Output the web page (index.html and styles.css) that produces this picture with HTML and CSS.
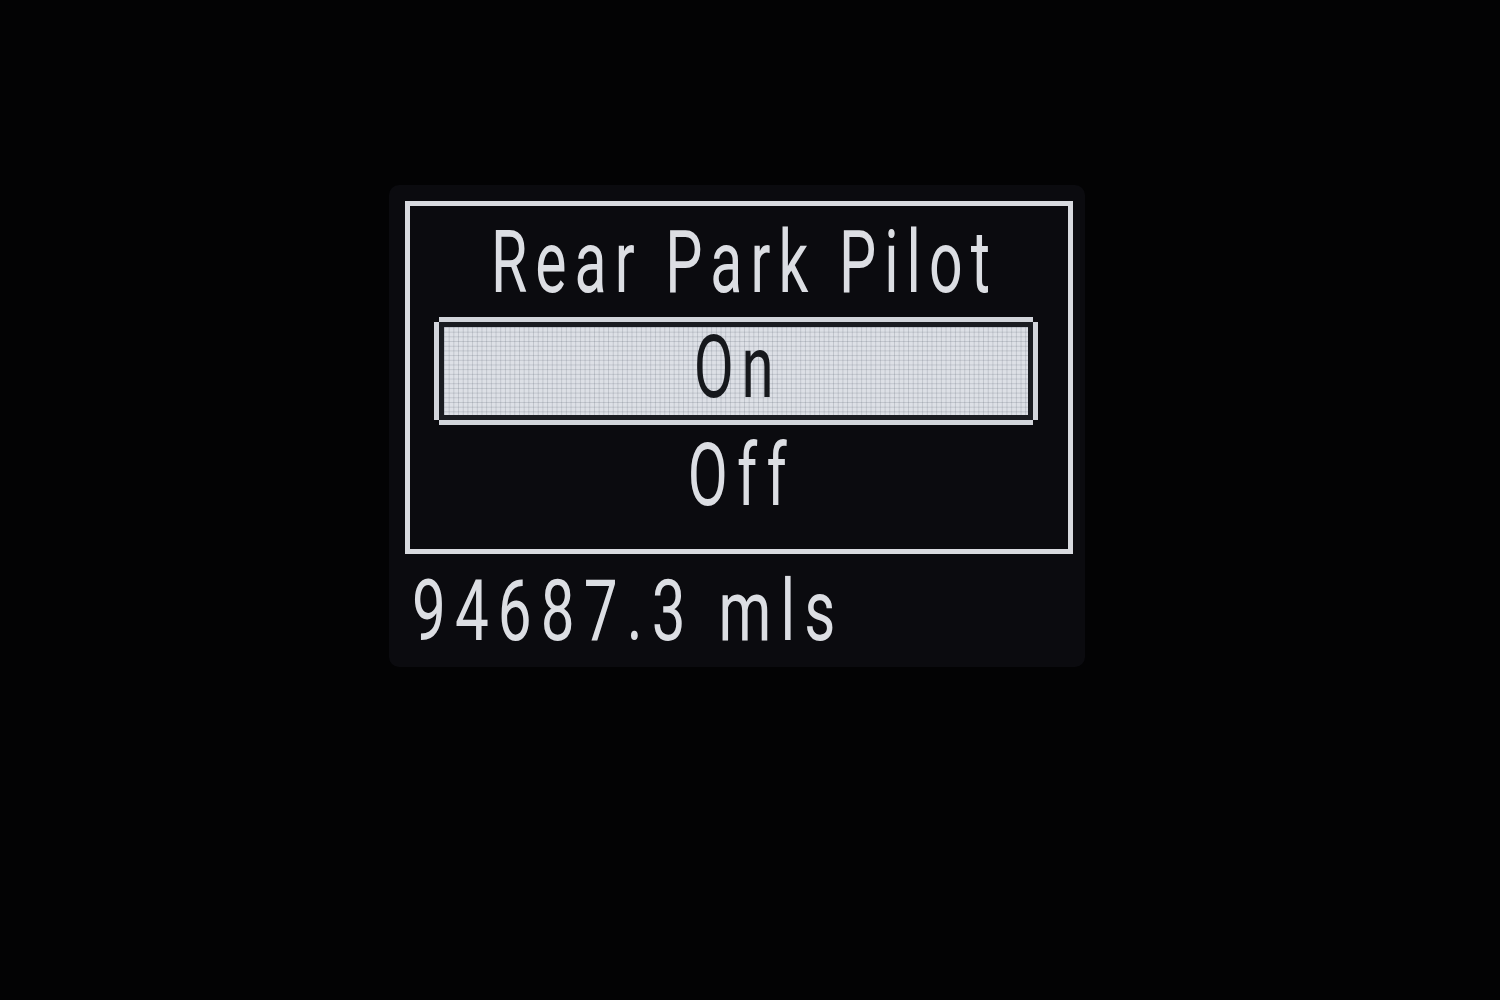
FILE: index.html
```html
<!DOCTYPE html>
<html lang="en">
<head>
<meta charset="utf-8">
<title>Rear Park Pilot</title>
<link rel="stylesheet" href="styles.css">
</head>
<body>
<div class="screen">
  <div class="frame">
    <div class="title-row"><span class="txt title">Rear Park Pilot</span></div>
    <div class="sel">
      <div class="sel-inner"><span class="txt on">On</span></div>
    </div>
    <div class="off-row"><span class="txt off">Off</span></div>
  </div>
  <div class="odo-row"><span class="txt odo">94687.3 mls</span></div>
</div>
</body>
</html>
```
FILE: styles.css
```css
html, body {
  margin: 0;
  padding: 0;
  background: #030304;
  width: 1500px;
  height: 1000px;
  overflow: hidden;
}

.screen {
  margin: 185px 0 0 389px;
  width: 696px;
  height: 482px;
  box-sizing: border-box;
  padding: 16px;
  border-radius: 10px;
  background: #0b0b0f;
  display: flex;
  flex-direction: column;
}

.frame {
  width: 668px;
  height: 356px;
  box-sizing: border-box;
  border: 5px solid #d8dadf;
  display: flex;
  flex-direction: column;
}

.txt {
  display: inline-block;
  font-family: Roboto, "Liberation Sans", sans-serif;
  font-weight: 400;
  font-size: 88px;
  line-height: 80px;
  white-space: nowrap;
}

.title-row,
.off-row {
  display: flex;
  justify-content: center;
  height: 80px;
}

.title-row {
  padding-top: 16px;
  padding-left: 10px;
}

.title {
  color: #dcdee3;
  letter-spacing: 12px;
  transform: scaleX(0.67);
  transform-origin: center;
}

.sel {
  margin: 15px 0 0 24px;
  width: 604px;
  padding: 5px;
  box-sizing: border-box;
  background: #d2d5db;
  clip-path: polygon(5px 0, calc(100% - 5px) 0, calc(100% - 5px) 5px, 100% 5px, 100% calc(100% - 5px), calc(100% - 5px) calc(100% - 5px), calc(100% - 5px) 100%, 5px 100%, 5px calc(100% - 5px), 0 calc(100% - 5px), 0 5px, 5px 5px);
}

.sel-inner {
  border: 5px solid #1a1c21;
  height: 98px;
  box-sizing: border-box;
  display: flex;
  justify-content: center;
  padding-left: 4px;
  background-color: #dde0e6;
  background-image:
    linear-gradient(90deg, rgba(90, 96, 110, 0.22) 1px, transparent 1px),
    linear-gradient(rgba(90, 96, 110, 0.22) 1px, transparent 1px);
  background-size: 4.7px 4.7px;
}

.on {
  color: #16181c;
  letter-spacing: 12px;
  transform: scaleX(0.66);
  transform-origin: center;
}

.off-row {
  margin-top: 10px;
  padding-left: 6px;
}

.off {
  color: #dcdee3;
  letter-spacing: 14px;
  transform: scaleX(0.66);
  transform-origin: center;
}

.odo-row {
  margin-top: 17px;
  padding-left: 7px;
  height: 80px;
}

.odo {
  color: #dcdee3;
  font-size: 86px;
  letter-spacing: 13px;
  transform: scaleX(0.7);
  transform-origin: left center;
}
```
